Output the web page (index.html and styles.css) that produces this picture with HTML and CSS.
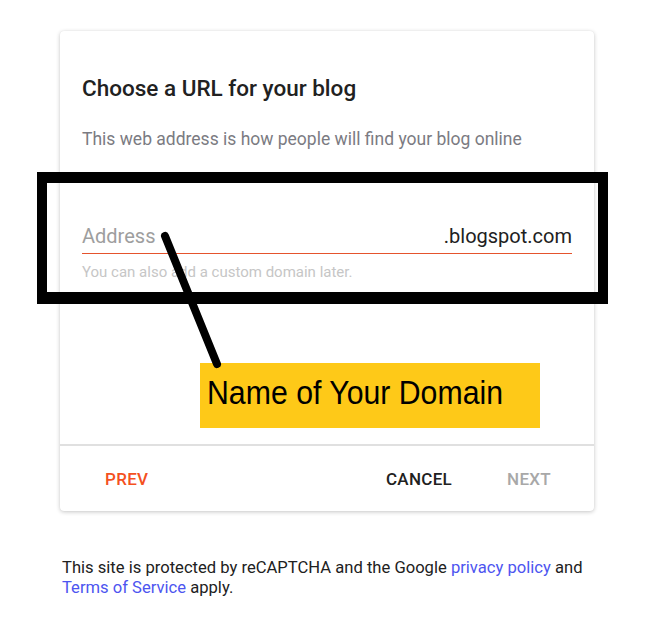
FILE: index.html
```html
<!DOCTYPE html>
<html lang="en">
<head>
    <meta charset="UTF-8">
    <title>Choose a URL for your blog</title>
    <link rel="stylesheet" href="styles.css">
</head>
<body>

    <div class="page">
        <div class="dialog">
            <div class="dialog-body">
                <h1>Choose a URL for your blog</h1>
                <p class="subtitle">This web address is how people will find your blog online</p>
                <div class="field">
                    <span class="placeholder">Address</span>
                    <span class="suffix">.blogspot.com</span>
                </div>
                <div class="hint">You can also add a custom domain later.</div>
            </div>
            <div class="dialog-actions">
                <button class="btn prev">Prev</button>
                <button class="btn cancel">Cancel</button>
                <button class="btn next">Next</button>
            </div>
        </div>

        <p class="legal">
            This site is protected by reCAPTCHA and the Google <a href="#">privacy policy</a> and
            <a href="#">Terms of Service</a> apply.
        </p>

        <!-- annotation drawn on top of the screenshot -->
        <div class="mark-box"></div>
        <svg class="mark-line" width="655" height="642" viewBox="0 0 655 642">
            <line x1="165" y1="236" x2="217" y2="364" stroke="#000" stroke-width="8" stroke-linecap="round"/>
        </svg>
        <div class="mark-label"><span>Name of Your Domain</span></div>
    </div>

</body>
</html>
```

FILE: styles.css
```css
body {
    margin: 0;
    background-color: #fff;
    font-family: Roboto, 'Noto Sans', sans-serif;
    color: #212121;
}
.page {
    position: relative;
    width: 655px;
    height: 642px;
    padding: 31px 0 0 60px;
    box-sizing: border-box;
}
.dialog {
    width: 534px;
    background-color: #fff;
    border-radius: 4px;
    box-shadow: 0 1px 4px rgba(0, 0, 0, 0.22), 0 0 1px rgba(0, 0, 0, 0.08);
}
.dialog-body {
    padding: 43px 22px 163px 22px;
    border-bottom: 2px solid #e0e0e0;
}
h1 {
    margin: 0;
    font-size: 22.5px;
    line-height: 28px;
    font-weight: 500;
    color: #212121;
}
.subtitle {
    margin: 25px 0 0 0;
    font-size: 17.5px;
    line-height: 24px;
    color: #7b7b82;
}
.field {
    display: flex;
    justify-content: space-between;
    margin-top: 73px;
    padding-bottom: 5px;
    border-bottom: 1px solid #e5532d;
    font-size: 20px;
    line-height: 24px;
}
.placeholder {
    color: #9e9e9e;
}
.suffix {
    color: #212121;
}
.hint {
    margin-top: 9px;
    font-size: 15px;
    line-height: 18px;
    color: #c6c6c6;
}
.dialog-actions {
    display: flex;
    align-items: center;
    height: 65px;
    padding: 0 43px 0 45px;
    box-sizing: border-box;
}
.btn {
    background: none;
    border: none;
    padding: 0;
    font-family: Roboto, sans-serif;
    font-size: 17px;
    font-weight: 500;
    text-transform: uppercase;
    letter-spacing: 0.3px;
    cursor: pointer;
}
.prev {
    color: #f4511e;
    margin-right: auto;
}
.cancel {
    color: #212121;
    margin-right: 55px;
}
.next {
    color: #a8a8a8;
}
.legal {
    width: 560px;
    margin: 47px 0 0 2px;
    font-size: 16.6px;
    line-height: 20px;
    color: #212121;
}
.legal a {
    color: #4d55f0;
    text-decoration: none;
}
.mark-box {
    position: absolute;
    left: 37px;
    top: 172px;
    width: 571px;
    height: 132px;
    border-style: solid;
    border-color: #000;
    border-width: 11px 10px 12px 10px;
    box-sizing: border-box;
}
.mark-line {
    position: absolute;
    left: 0;
    top: 0;
    z-index: 2;
}
.mark-label {
    position: absolute;
    left: 200px;
    top: 363px;
    width: 340px;
    height: 65px;
    padding: 9px 0 0 7px;
    box-sizing: border-box;
    background-color: #fec918;
    font-family: 'Liberation Sans', Arial, sans-serif;
    font-size: 34px;
    line-height: 40px;
    color: #000;
    white-space: nowrap;
}
.mark-label span {
    display: inline-block;
    transform: scaleX(0.89);
    transform-origin: left center;
}
```
